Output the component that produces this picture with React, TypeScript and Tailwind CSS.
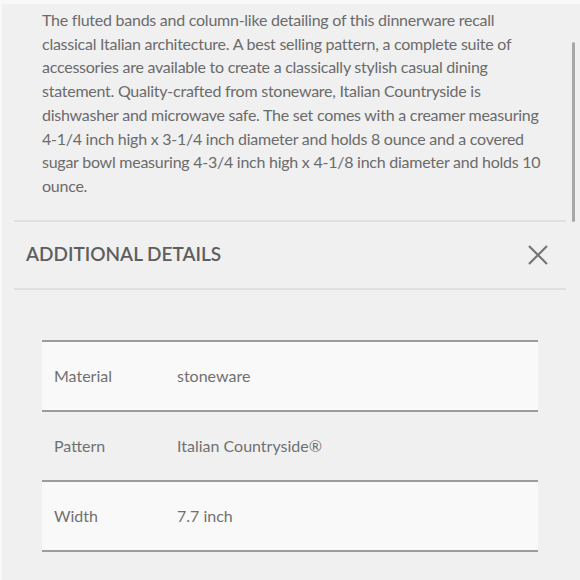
const details = [
  { label: "Material", value: "stoneware" },
  { label: "Pattern", value: "Italian Countryside®" },
  { label: "Width", value: "7.7 inch" },
  { label: "Length", value: "4.3 inch" },
];

const lines = [
  "The fluted bands and column-like detailing of this dinnerware recall",
  "classical Italian architecture. A best selling pattern, a complete suite of",
  "accessories are available to create a classically stylish casual dining",
  "statement. Quality-crafted from stoneware, Italian Countryside is",
  "dishwasher and microwave safe. The set comes with a creamer measuring",
  "4-1/4 inch high x 3-1/4 inch diameter and holds 8 ounce and a covered",
  "sugar bowl measuring 4-3/4 inch high x 4-1/8 inch diameter and holds 10",
  "ounce.",
];

export default function App() {
  return (
    <div
      className="relative w-[580px] h-[580px] overflow-hidden bg-[#f0f0f0] border-t-4 border-l-2 border-[#f8f8f8] text-[#6b6b6b]"
      style={{ fontFamily: "Lato, 'Open Sans', sans-serif" }}
    >
      <p className="pl-[40px] pr-[20px] pt-[4px] text-[16px] leading-[23.7px] tracking-[-0.25px]">
        {lines.map((l) => (
          <span key={l} className="block whitespace-nowrap">
            {l}
          </span>
        ))}
      </p>

      <div className="mt-[22px] ml-[12px] mr-[14px] border-t-2 border-[#e0e0e0]" />
      <div className="flex items-center justify-between h-[66px] pl-[24px] pr-[32px]">
        <h2 className="text-[19px] font-semibold text-[#5e5e5e]">ADDITIONAL DETAILS</h2>
        <svg width="20" height="20" viewBox="0 0 20 20" className="text-[#767676]">
          <path d="M1 1 L19 19 M19 1 L1 19" stroke="currentColor" strokeWidth="2.2" fill="none" />
        </svg>
      </div>
      <div className="ml-[12px] mr-[14px] border-t-2 border-[#e0e0e0]" />

      <div className="mt-[50px] ml-[40px] w-[496px] border-t-2 border-[#9c9c9c] text-[#707070]">
        {details.map((d, i) => (
          <div
            key={d.label}
            className={`flex items-center h-[70px] border-b-2 border-[#9c9c9c] text-[16px] ${
              i % 2 === 0 ? "bg-[#f9f9f9]" : ""
            }`}
          >
            <span className="w-[135px] pl-[12px]">{d.label}</span>
            <span>{d.value}</span>
          </div>
        ))}
      </div>

      <div className="absolute right-[5px] top-[38px] w-[3px] h-[180px] rounded-full bg-[#a8a8a8]" />
    </div>
  );
}
